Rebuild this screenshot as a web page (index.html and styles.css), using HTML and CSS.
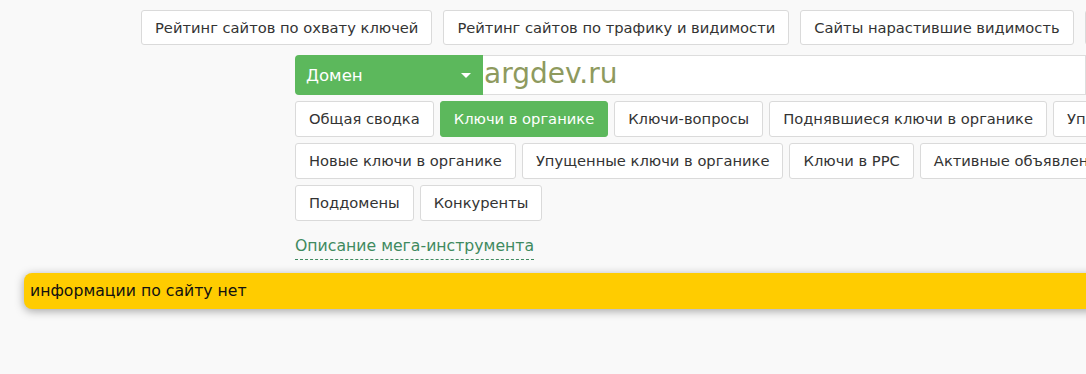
FILE: index.html
```html
<!DOCTYPE html>
<html lang="ru">
<head>
<meta charset="utf-8">
<title>argdev.ru</title>
<link rel="stylesheet" href="styles.css">
</head>
<body>
<div class="page">
  <nav class="top-nav">
    <a class="btn">Рейтинг сайтов по охвату ключей</a>
    <a class="btn">Рейтинг сайтов по трафику и видимости</a>
    <a class="btn">Сайты нарастившие видимость</a>
    <a class="btn">Сайты потерявшие видимость</a>
  </nav>
  <div class="tool">
    <div class="search">
      <div class="select">
        <span>Домен</span>
        <span class="caret"></span>
      </div>
      <div class="input">argdev.ru</div>
    </div>
    <div class="tabs">
      <a class="btn tab">Общая сводка</a>
      <a class="btn tab active">Ключи в органике</a>
      <a class="btn tab">Ключи-вопросы</a>
      <a class="btn tab">Поднявшиеся ключи в органике</a>
      <a class="btn tab">Упавшие ключи в органике</a>
    </div>
    <div class="tabs">
      <a class="btn tab">Новые ключи в органике</a>
      <a class="btn tab">Упущенные ключи в органике</a>
      <a class="btn tab">Ключи в PPC</a>
      <a class="btn tab">Активные объявления</a>
    </div>
    <div class="tabs">
      <a class="btn tab">Поддомены</a>
      <a class="btn tab">Конкуренты</a>
    </div>
    <div class="desc"><a class="desc-link">Описание мега-инструмента</a></div>
  </div>
  <div class="notice">информации по сайту нет</div>
</div>
</body>
</html>
```
FILE: styles.css
```css
html, body {
  margin: 0;
  padding: 0;
  overflow: hidden;
  background: #f9f9f9;
}
body {
  font-family: "DejaVu Sans", Verdana, sans-serif;
  font-size: 14.7px;
  color: #333;
  width: 1086px;
  height: 374px;
}
.page {
  padding-top: 10px;
}
.top-nav {
  display: flex;
  flex-wrap: nowrap;
  gap: 11px;
  padding-left: 141px;
  white-space: nowrap;
}
.btn {
  display: inline-block;
  flex: none;
  box-sizing: border-box;
  height: 35px;
  line-height: 33px;
  padding: 0 13px;
  background: #fff;
  border: 1px solid #dadada;
  border-radius: 3px;
  color: #333;
  white-space: nowrap;
}
.tool {
  padding-left: 295px;
  margin-top: 10px;
}
.search {
  display: flex;
  height: 40px;
}
.select {
  box-sizing: border-box;
  width: 188px;
  flex: none;
  background: #5cb85c;
  color: #fff;
  border-radius: 4px 0 0 4px;
  display: flex;
  align-items: center;
  justify-content: space-between;
  padding: 0 12px 0 11px;
  font-size: 16.6px;
}
.caret {
  width: 0;
  height: 0;
  border-left: 5px solid transparent;
  border-right: 5px solid transparent;
  border-top: 5px solid #fff;
}
.input {
  flex: 1;
  box-sizing: border-box;
  background: #fff;
  border: 1px solid #ddd;
  border-left: none;
  font-size: 28px;
  line-height: 36px;
  color: #8e9a5e;
  padding-left: 1px;
  white-space: nowrap;
}
.tabs {
  display: flex;
  flex-wrap: nowrap;
  gap: 6px;
  margin-top: 6px;
  white-space: nowrap;
}
.tab {
  height: 36px;
  line-height: 34px;
  padding: 0 13px;
}
.tab.active {
  background: #5cb85c;
  border-color: #5cb85c;
  color: #fff;
}
.desc {
  margin-top: 15px;
  height: 20px;
  line-height: 20px;
}
.desc-link {
  color: #3f8a5f;
  font-size: 15.7px;
  text-decoration: none;
  border-bottom: 1px dashed #3f8a5f;
  padding-bottom: 4px;
}
.notice {
  margin-left: 24px;
  margin-top: 17px;
  width: 1100px;
  height: 36px;
  box-sizing: border-box;
  background: #fc0;
  border-radius: 8px;
  box-shadow: 0 2px 10px rgba(0,0,0,0.35);
  padding-left: 6px;
  line-height: 36px;
  font-size: 15.7px;
  color: #111;
}
```
